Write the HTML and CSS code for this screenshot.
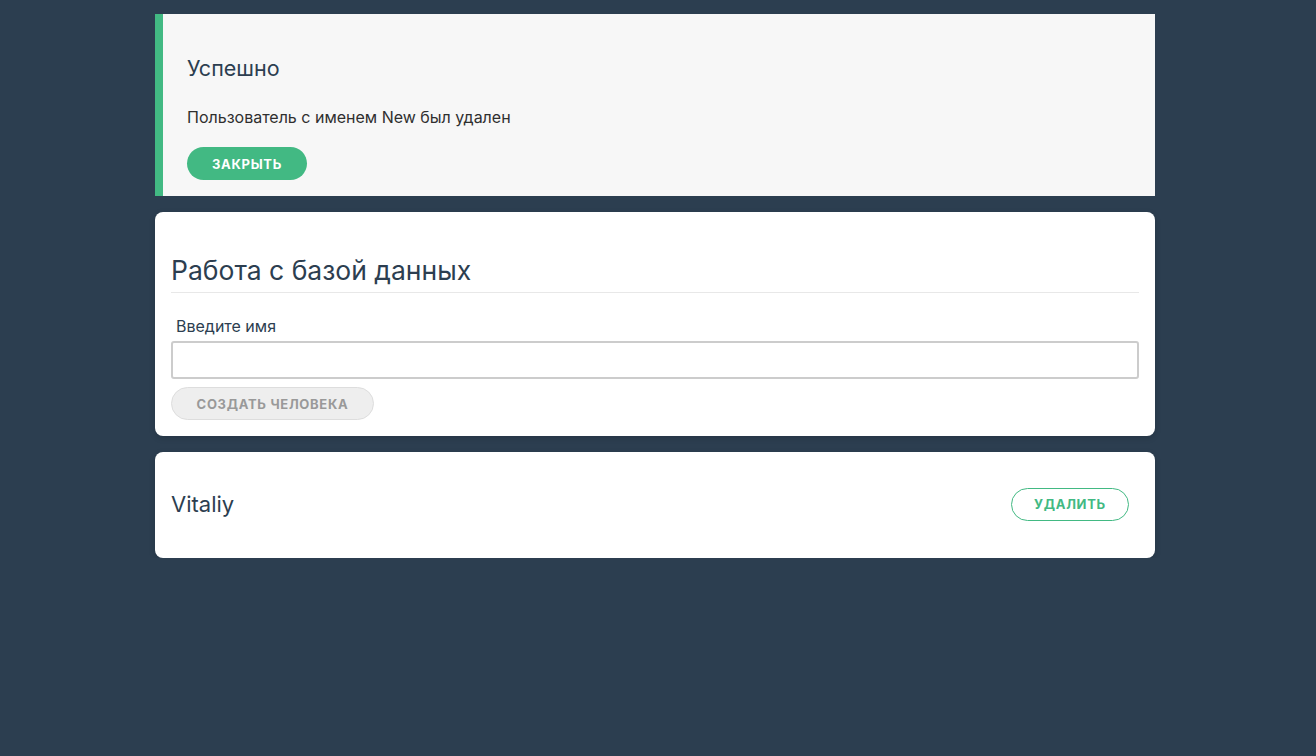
FILE: index.html
```html
<!DOCTYPE html>
<html lang="ru">
<head>
<meta charset="utf-8">
<link rel="stylesheet" href="styles.css">
</head>
<body>
<main class="page">
  <section class="notice">
    <h3 class="notice-title">Успешно</h3>
    <p class="notice-text">Пользователь с именем New был удален</p>
    <button class="btn btn-green">Закрыть</button>
  </section>
  <section class="card">
    <h2 class="card-title">Работа с базой данных</h2>
    <label class="field-label">Введите имя</label>
    <input class="field-input" type="text">
    <button class="btn btn-disabled">Создать человека</button>
  </section>
  <section class="card row">
    <span class="person-name">Vitaliy</span>
    <button class="btn btn-outline">Удалить</button>
  </section>
</main>
</body>
</html>
```
FILE: styles.css
```css
html, body {
  margin: 0;
  padding: 0;
  background: #2c3e50;
  font-family: Inter, "Noto Sans", sans-serif;
  color: #2c3e50;
}
body {
  padding-right: 6px;
}
.page {
  width: 1000px;
  margin: 0 auto;
  padding-top: 14px;
  display: flex;
  flex-direction: column;
  gap: 16px;
}
.notice {
  background: #f7f7f7;
  border-left: 8px solid #42b983;
  padding: 42px 24px 14px 24px;
  height: 126px;
  display: flex;
  flex-direction: column;
  align-items: flex-start;
}
.notice-title {
  margin: 0;
  font-size: 21.5px;
  font-weight: 400;
  line-height: 24px;
}
.notice-text {
  margin: 27px 0 0 0;
  font-size: 16px;
  line-height: 20px;
  color: #2f2f2f;
}
.btn {
  font-family: Inter, "Noto Sans", sans-serif;
  font-size: 13px;
  font-weight: 700;
  letter-spacing: 0.7px;
  text-transform: uppercase;
  border-radius: 17px;
  height: 33px;
  cursor: pointer;
}
.btn-green {
  margin-top: 20px;
  width: 120px;
  background: #42b983;
  color: #fff;
  border: none;
}
.card {
  background: #fff;
  border-radius: 8px;
  padding: 16px;
  display: flex;
  flex-direction: column;
  align-items: flex-start;
  box-shadow: 0 2px 6px rgba(0,0,0,0.15);
}
.card-title {
  margin: 26px 0 0 0;
  font-size: 26.5px;
  font-weight: 400;
  line-height: 32px;
  width: 100%;
  padding-bottom: 6px;
  border-bottom: 1px solid #e8e8e8;
}
.field-label {
  margin: 23px 0 0 5px;
  font-size: 16px;
  line-height: 20px;
}
.field-input {
  margin-top: 5px;
  width: 100%;
  box-sizing: border-box;
  height: 38px;
  border: 2px solid #ccc;
  border-radius: 3px;
  font-size: 15px;
}
.btn-disabled {
  margin-top: 8px;
  width: 203px;
  background: #eee;
  border: 1px solid #ddd;
  color: #999;
}
.row {
  flex-direction: row;
  justify-content: space-between;
  align-items: center;
  height: 74px;
  padding: 15px 26px 17px 16px;
}
.person-name {
  font-size: 22px;
  line-height: 28px;
}
.btn-outline {
  width: 118px;
  background: #fff;
  border: 1px solid #42b983;
  color: #42b983;
}
```
